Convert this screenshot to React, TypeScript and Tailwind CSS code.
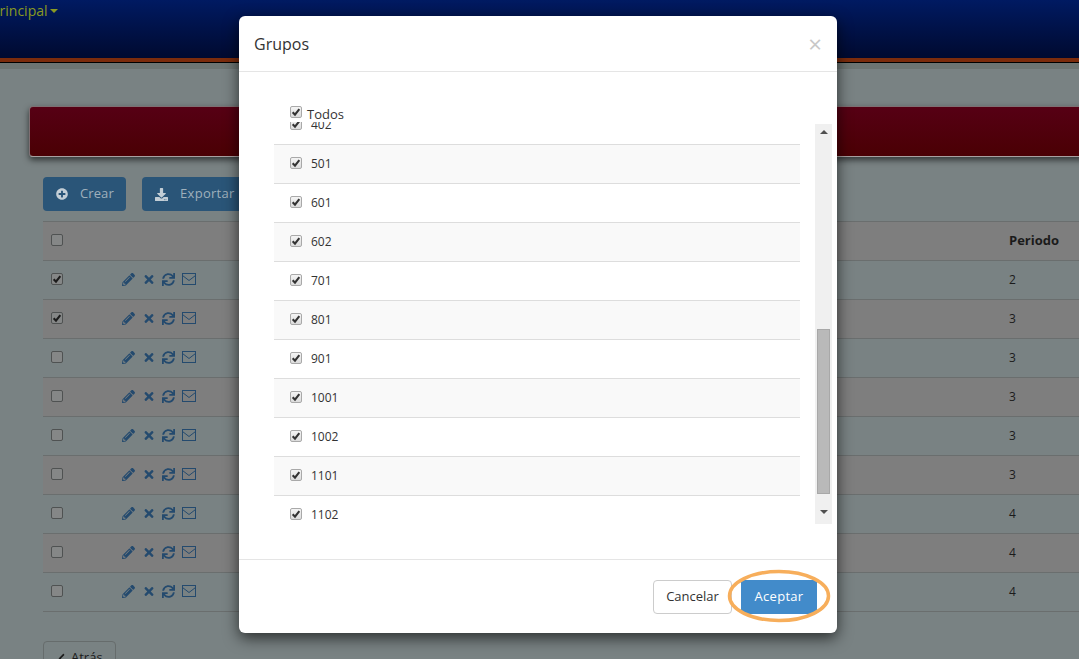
import React from "react";
import { FaPencilAlt, FaTimes, FaSync, FaPlusCircle, FaDownload, FaChevronLeft } from "react-icons/fa";

function Check({ checked, dim }: { checked: boolean; dim?: boolean }) {
  return (
    <span
      className={
        "flex h-[12px] w-[12px] shrink-0 items-center justify-center rounded-[2px] border " +
        (dim
          ? "border-[#4f5252] bg-[#858787]"
          : "border-[#a9a9a9] bg-gradient-to-b from-[#f4f4f4] to-[#dcdcdc]")
      }
    >
      {checked && (
        <svg viewBox="0 0 12 12" className="h-[10px] w-[10px]">
          <path d="M2 6.2 L4.8 9.2 L10 2.6" fill="none" stroke={dim ? "#1c1c1c" : "#333333"} strokeWidth="2.5" />
        </svg>
      )}
    </span>
  );
}

const periods = ["2", "3", "3", "3", "3", "3", "4", "4", "4"];
const groups = ["402", "501", "601", "602", "701", "801", "901", "1001", "1002", "1101", "1102"];

function Row({ p, i }: { p: string; i: number }) {
  return (
    <div
      className={
        "flex h-[39px] items-center border-t border-[#6a6e6e] " + (i % 2 === 0 ? "bg-[#798283]" : "bg-[#7e7e7e]")
      }
    >
      <div className="mb-[2px] ml-[8px] w-[71px]">
        <Check checked={i < 2} dim />
      </div>
      <div className="mb-[2px] flex items-center text-[#244a6e]">
        <FaPencilAlt className="h-[13px] w-[13px]" />
        <FaTimes className="ml-[8px] h-[13px] w-[12px]" />
        <FaSync className="ml-[7px] h-[13px] w-[13px]" />
        <svg viewBox="0 0 14 12" className="ml-[7px] h-[12px] w-[14px]" fill="none" stroke="currentColor" strokeWidth="1">
          <rect x="0.5" y="0.5" width="13" height="11" />
          <path d="M0.5 2.5 L7 7.5 L13.5 2.5" />
        </svg>
      </div>
      <div className="ml-auto w-[70px] text-[12px] text-[#1b1b1b]">{p}</div>
    </div>
  );
}

export default function App() {
  return (
    <div
      className="relative h-[659px] w-[1079px] overflow-hidden bg-[#798283] text-[#222]"
      style={{ fontFamily: '"Open Sans", "Noto Sans", sans-serif' }}
    >
      <header className="h-[63px] border-b border-black">
        <div className="h-[58px] bg-gradient-to-b from-[#001a62] to-[#000a30] text-[14px] leading-[22px] text-[#8a9a22]">
          <span className="ml-[-9px] inline-flex items-center gap-[2px]">
            principal
            <span className="h-0 w-0 border-x-[4px] border-t-[4px] border-x-transparent border-t-[#8a9a22]" />
          </span>
        </div>
        <div className="h-[4px] bg-[#7c2c0c]" />
      </header>
      <div className="h-[6px] bg-[#6d7573]" />

      <main className="pl-[29px]">
        <div className="mt-[37px] h-[51px] w-[1100px] rounded-[4px] border border-[#7f6f72] border-b-[#a8a0a0] bg-gradient-to-b from-[#560014] to-[#4a0004] shadow-[0_3px_6px_rgba(0,0,0,0.6)]" />
        <div className="ml-[14px] mt-[20px] flex gap-[16px] text-[13px] text-[#9fb0bc]">
          <div className="flex h-[34px] w-[83px] items-center gap-[12px] rounded-[4px] bg-[#2a5578] pl-[13px] tracking-[0.1px]">
            <FaPlusCircle className="h-[12px] w-[12px] text-[#c3ced6]" />
            Crear
          </div>
          <div className="flex h-[34px] w-[120px] items-center gap-[12px] rounded-[4px] bg-[#2a5578] pl-[13px] tracking-[0.3px]">
            <FaDownload className="h-[13px] w-[13px] text-[#c3ced6]" />
            Exportar
          </div>
        </div>
        <div className="ml-[14px] mt-[10px] w-[1036px] border-b border-[#6a6e6e]">
          <div className="flex h-[39px] items-center border-t border-[#6a6e6e] bg-[#7e7e7e]">
            <div className="mb-[2px] ml-[8px]">
              <Check checked={false} dim />
            </div>
            <div className="ml-auto w-[70px] text-[13px] font-bold text-[#1b1b1b]">Periodo</div>
          </div>
          {periods.map((p, i) => (
            <Row key={i} p={p} i={i} />
          ))}
        </div>
        <div className="ml-[14px] mt-[29px] flex h-[34px] w-[73px] items-center gap-[4px] rounded-[4px] border border-[#666c6c] pl-[12px] text-[13px] text-[#1b1b1b]">
          <FaChevronLeft className="h-[11px] w-[11px]" />
          Atrás
        </div>
      </main>

      <section className="absolute left-[239px] top-[16px] flex h-[617px] w-[598px] flex-col rounded-[6px] bg-white shadow-[0_5px_15px_rgba(0,0,0,0.65)]">
        <div className="flex h-[56px] items-center justify-between border-b border-[#e5e5e5] pl-[15px] pr-[15px]">
          <h4 className="text-[16px] text-[#333]">Grupos</h4>
          <span className="text-[24px] leading-none text-[#c8c8c8]">×</span>
        </div>

        <div className="flex h-[50px] items-end pl-[51px]">
          <span className="mb-[4px]">
            <Check checked />
          </span>
          <span className="mb-[-1px] ml-[5px] text-[13px] leading-[18px] text-[#333]">Todos</span>
        </div>

        <div className="ml-[35px] flex h-[402px] w-[558px] overflow-hidden">
          <div className="h-full w-[526px] overflow-hidden">
            <div className="mt-[-16px]">
              {groups.map((g, i) => (
                <div
                  key={g}
                  className={
                    "flex h-[39px] items-center border-b border-[#dddddd] pl-[16px] text-[12px] text-[#333] " +
                    (i % 2 === 1 ? "bg-[#f9f9f9]" : "bg-white")
                  }
                >
                  <span className="mb-[2px]">
                    <Check checked />
                  </span>
                  <span className="ml-[9px]">{g}</span>
                </div>
              ))}
            </div>
          </div>
          <div className="ml-[15px] mt-[2px] flex h-[400px] w-[17px] flex-col items-center bg-[#f0f0f0]">
            <span className="mt-[6px] h-0 w-0 border-x-[4px] border-b-[4px] border-x-transparent border-b-[#505050]" />
            <span className="mt-[195px] h-[165px] w-[13px] border border-[#a8a8a8] bg-[#b9b9b9]" />
            <span className="mt-[16px] h-0 w-0 border-x-[4px] border-t-[4px] border-x-transparent border-t-[#505050]" />
          </div>
        </div>

        <div className="mt-[35px] flex flex-1 items-center justify-end gap-[9px] border-t border-[#e5e5e5] pr-[20px] text-[13px]">
          <div className="flex h-[34px] w-[79px] items-center justify-center rounded-[4px] border border-[#cccccc] bg-white text-[#333]">
            Cancelar
          </div>
          <div className="flex h-[34px] w-[76px] items-center justify-center rounded-[2px] bg-[#428bca] tracking-[0.3px] text-white">
            Aceptar
          </div>
        </div>
      </section>

      <svg className="absolute left-[726px] top-[568px]" width="106" height="56" viewBox="0 0 106 56">
        <ellipse cx="53" cy="28" ry="24.5" rx="49.5" fill="none" stroke="#f7ae5b" strokeWidth="3.5" />
      </svg>
    </div>
  );
}
